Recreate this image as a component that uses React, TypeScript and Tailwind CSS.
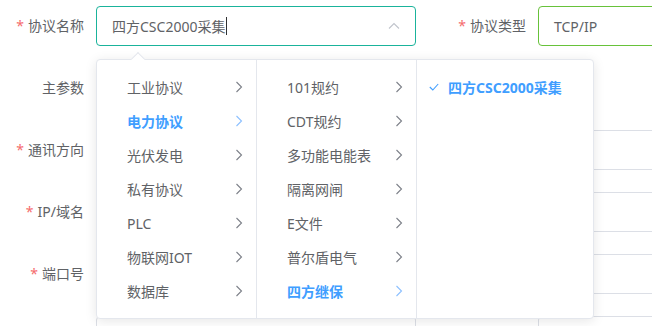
import React from "react";

const font = { fontFamily: '"Noto Sans", "Noto Sans CJK SC", sans-serif' };

function Chevron({ active }: { active?: boolean }) {
  return (
    <svg width="8" height="12" viewBox="0 0 8 12" className="shrink-0">
      <polyline
        points="1.5,1 6.5,6 1.5,11"
        fill="none"
        stroke={active ? "#8cc0ff" : "#7d8089"}
        strokeWidth="1.1"
      />
    </svg>
  );
}

function Label({ text, req, width = "w-[96px]" }: { text: string; req?: boolean; width?: string }) {
  return (
    <div className={`${width} shrink-0 pr-[12px] text-right text-[14px] text-[#606266] leading-[40px]`}>
      {req && <span className="text-[#f56c6c] mr-[4px]">*</span>}
      {text}
    </div>
  );
}

function Input({ className = "", children }: { className?: string; children?: React.ReactNode }) {
  return (
    <div className={`h-[40px] shrink-0 rounded-[4px] border bg-white flex items-center px-[15px] text-[14px] text-[#606266] ${className}`}>
      {children}
    </div>
  );
}

const col1 = ["工业协议", "电力协议", "光伏发电", "私有协议", "PLC", "物联网IOT", "数据库"];
const col2 = ["101规约", "CDT规约", "多功能电能表", "隔离网闸", "E文件", "普尔盾电气", "四方继保"];

function Menu({ items, active }: { items: string[]; active: string }) {
  return (
    <div className="w-[160px] shrink-0 border-r border-[#e4e7ed] pt-[10px]">
      {items.map((t) => {
        const a = t === active;
        return (
          <div
            key={t}
            className={`h-[34px] flex items-center justify-between pl-[30px] pr-[13px] text-[14px] ${
              a ? "text-[#409eff] font-bold" : "text-[#606266]"
            }`}
          >
            <span>{t}</span>
            <Chevron active={a} />
          </div>
        );
      })}
    </div>
  );
}

function Row({ label, req, right = true }: { label: string; req?: boolean; right?: boolean }) {
  return (
    <div className="flex">
      <Label text={label} req={req} />
      <Input className="w-[320px] border-[#dcdfe6]" />
      {right && (
        <>
          <div className="w-[122px] shrink-0" />
          <Input className="w-[200px] border-[#dcdfe6]" />
        </>
      )}
    </div>
  );
}

export default function App() {
  return (
    <div className="relative w-[652px] h-[326px] overflow-hidden bg-white" style={font}>
      <div className="pt-[6px] flex flex-col gap-[22px]">
        <div className="flex">
          <Label text="协议名称" req />
          <Input className="w-[320px] border-[#1ab39b] justify-between">
            <span className="flex items-center">
              四方CSC2000采集
              <span className="inline-block w-px h-[18px] bg-[#303133] ml-px" />
            </span>
            <svg width="12" height="8" viewBox="0 0 12 8">
              <polyline points="1,6.5 6,1.5 11,6.5" fill="none" stroke="#c0c4cc" strokeWidth="1.1" />
            </svg>
          </Input>
          <Label text="协议类型" req width="w-[122px]" />
          <Input className="w-[200px] border-[#67c23a]">TCP/IP</Input>
        </div>
        <Row label="主参数" right={false} />
        <Row label="通讯方向" req />
        <Row label="IP/域名" req />
        <Row label="端口号" req />
        <Row label="" />
      </div>

      <div className="absolute left-[96px] top-[59px] w-[498px] h-[260px] bg-white border border-[#e4e7ed] rounded-[4px] shadow-[0_2px_12px_rgba(0,0,0,0.1)] flex">
        <div className="absolute left-[36px] -top-[6px] w-[10px] h-[10px] rotate-45 bg-white border-l border-t border-[#e4e7ed]" />
        <Menu items={col1} active="电力协议" />
        <Menu items={col2} active="四方继保" />
        <div className="flex-1 pt-[10px]">
          <div className="h-[34px] flex items-center pl-[12px] text-[14px] text-[#409eff] font-bold">
            <svg width="10" height="8" viewBox="0 0 10 8" className="mr-[9px]">
              <polyline points="0.8,4 3.8,7 9.2,1" fill="none" stroke="#409eff" strokeWidth="1.1" />
            </svg>
            四方CSC2000采集
          </div>
        </div>
      </div>
    </div>
  );
}
